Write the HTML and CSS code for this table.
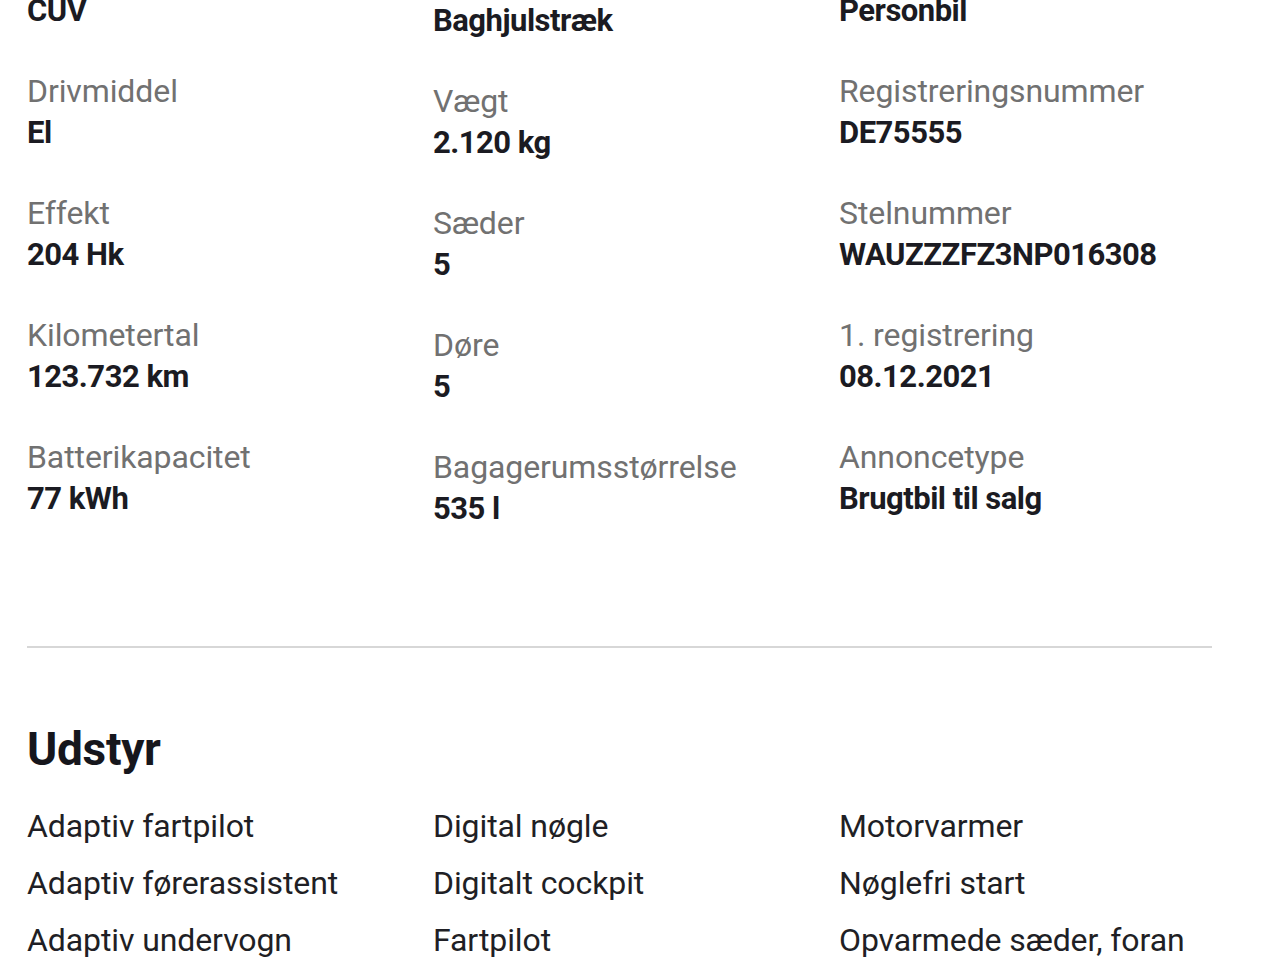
FILE: index.html
```html
<!DOCTYPE html>
<html lang="da">
<head>
<meta charset="utf-8">
<title>Bildetaljer</title>
<link rel="stylesheet" href="styles.css">
</head>
<body>
<main class="page">
  <section class="specs">
    <div class="spec-col">
      <div class="spec"><div class="value">CUV</div></div>
      <div class="spec"><div class="label">Drivmiddel</div><div class="value">El</div></div>
      <div class="spec"><div class="label">Effekt</div><div class="value">204 Hk</div></div>
      <div class="spec"><div class="label">Kilometertal</div><div class="value">123.732 km</div></div>
      <div class="spec"><div class="label">Batterikapacitet</div><div class="value">77 kWh</div></div>
    </div>
    <div class="spec-col spec-col--mid">
      <div class="spec"><div class="value">Baghjulstræk</div></div>
      <div class="spec"><div class="label">Vægt</div><div class="value">2.120 kg</div></div>
      <div class="spec"><div class="label">Sæder</div><div class="value">5</div></div>
      <div class="spec"><div class="label">Døre</div><div class="value">5</div></div>
      <div class="spec"><div class="label">Bagagerumsstørrelse</div><div class="value">535 l</div></div>
    </div>
    <div class="spec-col">
      <div class="spec"><div class="value">Personbil</div></div>
      <div class="spec"><div class="label">Registreringsnummer</div><div class="value">DE75555</div></div>
      <div class="spec"><div class="label">Stelnummer</div><div class="value">WAUZZZFZ3NP016308</div></div>
      <div class="spec"><div class="label">1. registrering</div><div class="value">08.12.2021</div></div>
      <div class="spec"><div class="label">Annoncetype</div><div class="value">Brugtbil til salg</div></div>
    </div>
  </section>

  <hr class="divider">

  <section class="equipment">
    <h2 class="equipment-title">Udstyr</h2>
    <ul class="equipment-list">
      <li>Adaptiv fartpilot</li>
      <li>Digital nøgle</li>
      <li>Motorvarmer</li>
      <li>Adaptiv førerassistent</li>
      <li>Digitalt cockpit</li>
      <li>Nøglefri start</li>
      <li>Adaptiv undervogn</li>
      <li>Fartpilot</li>
      <li>Opvarmede sæder, foran</li>
    </ul>
  </section>
</main>
</body>
</html>
```

FILE: styles.css
```css
html, body {
  margin: 0;
  padding: 0;
  background: #ffffff;
  overflow: hidden;
}

body {
  font-family: Roboto, "Liberation Sans", "DejaVu Sans", sans-serif;
  color: #1b1b22;
}

.page {
  width: 1185px;
  padding-left: 27px;
}

.specs {
  display: grid;
  grid-template-columns: repeat(3, 373px);
  column-gap: 33px;
  margin-top: -10px;
}

.spec-col {
  display: flex;
  flex-direction: column;
  row-gap: 38px;
}

.spec-col--mid {
  margin-top: 10px;
}

.spec {
  display: flex;
  flex-direction: column;
}

.label {
  font-size: 32px;
  line-height: 42px;
  color: #717171;
  font-weight: 400;
  letter-spacing: -0.1px;
}

.value {
  font-size: 31px;
  line-height: 42px;
  font-weight: 700;
  color: #1b1b22;
  letter-spacing: -0.5px;
}

.divider {
  border: 0;
  height: 2px;
  background: #d7d7d7;
  margin: 116px 0 0 0;
}

.equipment-title {
  margin: 75px 0 0 0;
  font-size: 46px;
  line-height: 52px;
  font-weight: 700;
  color: #16161c;
  letter-spacing: -0.3px;
}

.equipment-list {
  list-style: none;
  margin: 23px 0 0 0;
  padding: 0;
  display: grid;
  grid-template-columns: repeat(3, 373px);
  column-gap: 33px;
}

.equipment-list li {
  font-size: 32px;
  line-height: 57px;
  color: #1f1f25;
  letter-spacing: -0.1px;
}
```
